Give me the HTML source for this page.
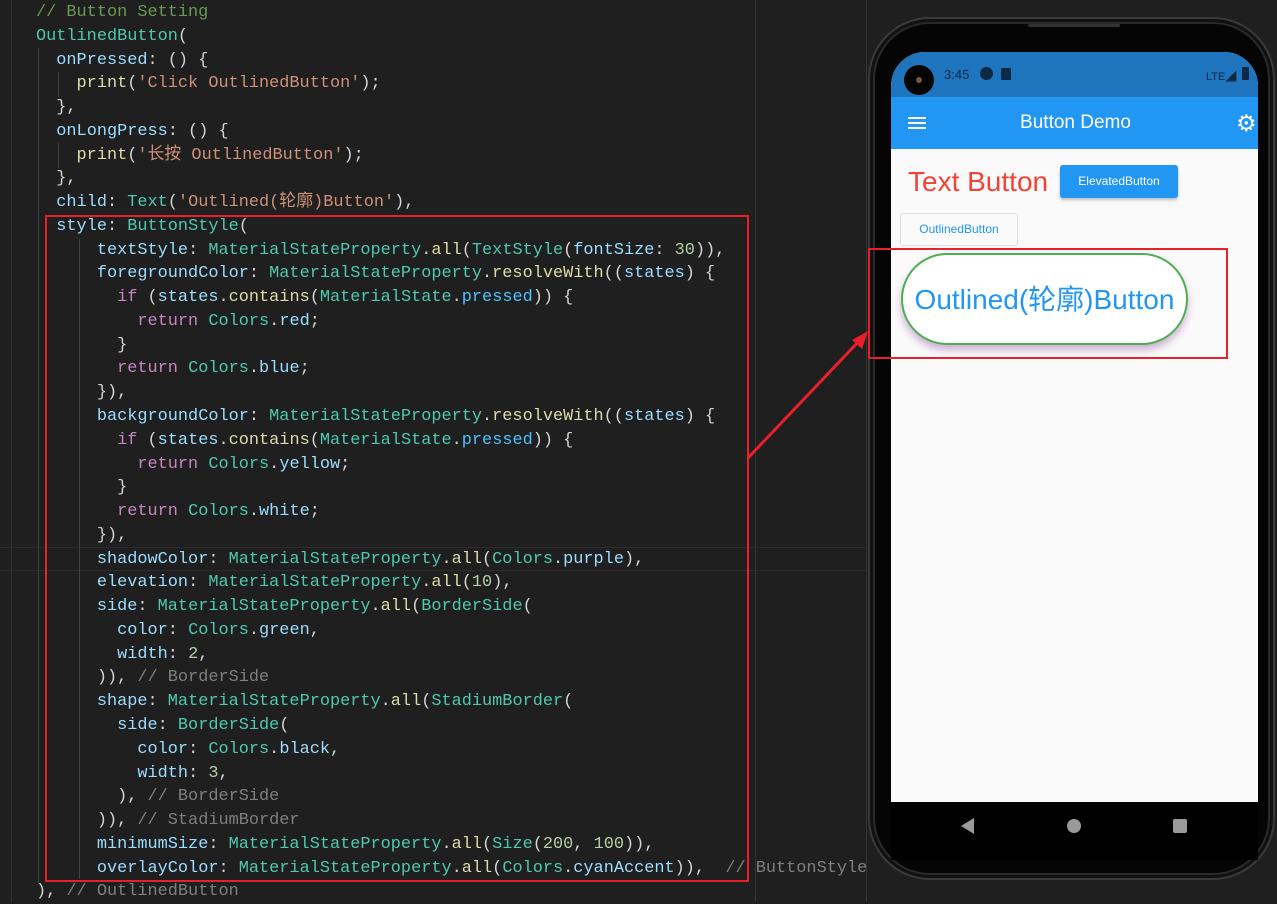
<!DOCTYPE html>
<html><head><meta charset="utf-8"><style>
html,body{margin:0;padding:0;}
body{width:1277px;height:902px;background:#1f1f1f;position:relative;overflow:hidden;font-family:"Liberation Sans","Noto Sans CJK SC",sans-serif;}
pre{position:absolute;left:36px;top:1px;margin:0;font-family:"Liberation Mono","Noto Sans CJK SC",monospace;font-size:16.9px;line-height:23.76px;color:#d4d4d4;white-space:pre;}
.c{color:#6a9955}.t{color:#4ec9b0}.p{color:#9cdcfe}.s{color:#ce9178}.f{color:#dcdcaa}.k{color:#c586c0}.n{color:#b5cea8}.e{color:#4fc1ff}.g{color:#7f7f7f}
.vl{position:absolute;width:1px;background:#3a3a3a}
</style></head><body>
<div class="vl" style="left:755px;top:0;height:902px;background:#333"></div>
<div class="vl" style="left:866px;top:0;height:902px;background:#333"></div>
<div style="position:absolute;left:0;top:547px;width:870px;height:1px;background:#2c2c2c"></div>
<div style="position:absolute;left:0;top:570px;width:870px;height:1px;background:#2c2c2c"></div>
<div class="vl" style="left:11px;top:0;height:902px;background:#303030"></div>
<div class="vl" style="left:38px;top:48px;height:835px;background:#404040"></div>
<div class="vl" style="left:58px;top:72px;height:25px;background:#404040"></div>
<div class="vl" style="left:58px;top:143px;height:25px;background:#404040"></div>
<div class="vl" style="left:79px;top:239px;height:640px;background:#404040"></div>
<pre><span class="c">// Button Setting</span>
<span class="t">OutlinedButton</span>(
  <span class="p">onPressed</span>: () {
    <span class="f">print</span>(<span class="s">'Click OutlinedButton'</span>);
  },
  <span class="p">onLongPress</span>: () {
    <span class="f">print</span>(<span class="s">'长按 OutlinedButton'</span>);
  },
  <span class="p">child</span>: <span class="t">Text</span>(<span class="s">'Outlined(轮廓)Button'</span>),
  <span class="p">style</span>: <span class="t">ButtonStyle</span>(
      <span class="p">textStyle</span>: <span class="t">MaterialStateProperty</span>.<span class="f">all</span>(<span class="t">TextStyle</span>(<span class="p">fontSize</span>: <span class="n">30</span>)),
      <span class="p">foregroundColor</span>: <span class="t">MaterialStateProperty</span>.<span class="f">resolveWith</span>((<span class="p">states</span>) {
        <span class="k">if</span> (<span class="p">states</span>.<span class="f">contains</span>(<span class="t">MaterialState</span>.<span class="e">pressed</span>)) {
          <span class="k">return</span> <span class="t">Colors</span>.<span class="p">red</span>;
        }
        <span class="k">return</span> <span class="t">Colors</span>.<span class="p">blue</span>;
      }),
      <span class="p">backgroundColor</span>: <span class="t">MaterialStateProperty</span>.<span class="f">resolveWith</span>((<span class="p">states</span>) {
        <span class="k">if</span> (<span class="p">states</span>.<span class="f">contains</span>(<span class="t">MaterialState</span>.<span class="e">pressed</span>)) {
          <span class="k">return</span> <span class="t">Colors</span>.<span class="p">yellow</span>;
        }
        <span class="k">return</span> <span class="t">Colors</span>.<span class="p">white</span>;
      }),
      <span class="p">shadowColor</span>: <span class="t">MaterialStateProperty</span>.<span class="f">all</span>(<span class="t">Colors</span>.<span class="p">purple</span>),
      <span class="p">elevation</span>: <span class="t">MaterialStateProperty</span>.<span class="f">all</span>(<span class="n">10</span>),
      <span class="p">side</span>: <span class="t">MaterialStateProperty</span>.<span class="f">all</span>(<span class="t">BorderSide</span>(
        <span class="p">color</span>: <span class="t">Colors</span>.<span class="p">green</span>,
        <span class="p">width</span>: <span class="n">2</span>,
      )), <span class="g">// BorderSide</span>
      <span class="p">shape</span>: <span class="t">MaterialStateProperty</span>.<span class="f">all</span>(<span class="t">StadiumBorder</span>(
        <span class="p">side</span>: <span class="t">BorderSide</span>(
          <span class="p">color</span>: <span class="t">Colors</span>.<span class="p">black</span>,
          <span class="p">width</span>: <span class="n">3</span>,
        ), <span class="g">// BorderSide</span>
      )), <span class="g">// StadiumBorder</span>
      <span class="p">minimumSize</span>: <span class="t">MaterialStateProperty</span>.<span class="f">all</span>(<span class="t">Size</span>(<span class="n">200</span>, <span class="n">100</span>)),
      <span class="p">overlayColor</span>: <span class="t">MaterialStateProperty</span>.<span class="f">all</span>(<span class="t">Colors</span>.<span class="p">cyanAccent</span>)),  <span class="g">// ButtonStyle</span>
), <span class="g">// OutlinedButton</span></pre>
<div style="position:absolute;left:45px;top:215px;width:700px;height:663px;border:2px solid #e8202a"></div>

<!-- phone -->
<div style="position:absolute;left:868px;top:17px;width:407px;height:863px;border-radius:62px;background:#050505;border:2px solid #3a3a3a;box-sizing:border-box;box-shadow:inset 0 0 0 3px #111,inset 0 0 0 5px #2a2a2a"></div>
<div style="position:absolute;left:1028px;top:24px;width:92px;height:3px;background:#333;border-radius:2px"></div>
<div style="position:absolute;left:891px;top:52px;width:367px;height:750px;background:#fafafa;border-radius:34px 34px 0 0;overflow:hidden">
  <div style="height:45px;background:#1e74bd;position:relative;color:#0d2a45;font-size:13px">
    <div style="position:absolute;left:13px;top:13px;width:30px;height:30px;border-radius:50%;background:#050505"></div>
    <div style="position:absolute;left:25px;top:25px;width:6px;height:6px;border-radius:50%;background:#6b5b45"></div>
    <span style="position:absolute;left:53px;top:15px">3:45</span>
    <div style="position:absolute;left:89px;top:15px;width:13px;height:13px;border-radius:50%;background:#0d2a45"></div>
    <div style="position:absolute;left:110px;top:16px;width:10px;height:12px;background:#0d2a45;border-radius:1px"></div>
    <span style="position:absolute;left:315px;top:16px;font-size:11px">LTE◢</span>
    <div style="position:absolute;left:351px;top:15px;width:7px;height:13px;background:#0d2a45;border-radius:1px"></div>
  </div>
  <div style="height:52px;background:#2196f3;position:relative;color:#fff">
    <div style="position:absolute;left:17px;top:20px;width:18px;height:2px;background:#fff;box-shadow:0 5px 0 #fff,0 10px 0 #fff"></div>
    <div style="position:absolute;left:1px;width:367px;top:15px;text-align:center;font-size:19px">Button Demo</div>
    <div style="position:absolute;left:345px;top:15px;font-size:23px;line-height:22px">⚙</div>
  </div>
  <div style="position:absolute;left:17px;top:114px;font-size:28px;color:#f44336">Text Button</div>
  <div style="position:absolute;left:169px;top:113px;width:118px;height:33px;background:#2196f3;border-radius:3px;box-shadow:0 2px 3px rgba(0,0,0,.25);color:#fff;font-size:12px;text-align:center;line-height:33px">ElevatedButton</div>
  <div style="position:absolute;left:9px;top:161px;width:116px;height:31px;border:1px solid #ddd;border-radius:3px;color:#2196f3;font-size:12px;text-align:center;line-height:31px">OutlinedButton</div>
  <div style="position:absolute;left:10px;top:201px;width:287px;height:92px;border:2px solid #4caf50;border-radius:46px;background:#fff;box-shadow:0 5px 8px rgba(120,40,140,.35);box-sizing:border-box;color:#2196f3;font-size:28px;line-height:90px;text-align:center">Outlined(轮廓)Button</div>
</div>
<div style="position:absolute;left:891px;top:802px;width:367px;height:58px;background:#000">
  <div style="position:absolute;left:70px;top:16px;width:0;height:0;border-top:8px solid transparent;border-bottom:8px solid transparent;border-right:13px solid #9a9a9a"></div>
  <div style="position:absolute;left:176px;top:17px;width:14px;height:14px;border-radius:50%;background:#9a9a9a"></div>
  <div style="position:absolute;left:282px;top:17px;width:14px;height:14px;border-radius:2px;background:#9a9a9a"></div>
</div>
<div style="position:absolute;left:868px;top:248px;width:356px;height:107px;border:2px solid #e8202a"></div>
<svg style="position:absolute;left:0;top:0" width="1277" height="902"><line x1="748" y1="458" x2="860" y2="340" stroke="#e8202a" stroke-width="3"/><polygon points="868,331 852,340 862,349" fill="#e8202a"/></svg>
</body></html>
